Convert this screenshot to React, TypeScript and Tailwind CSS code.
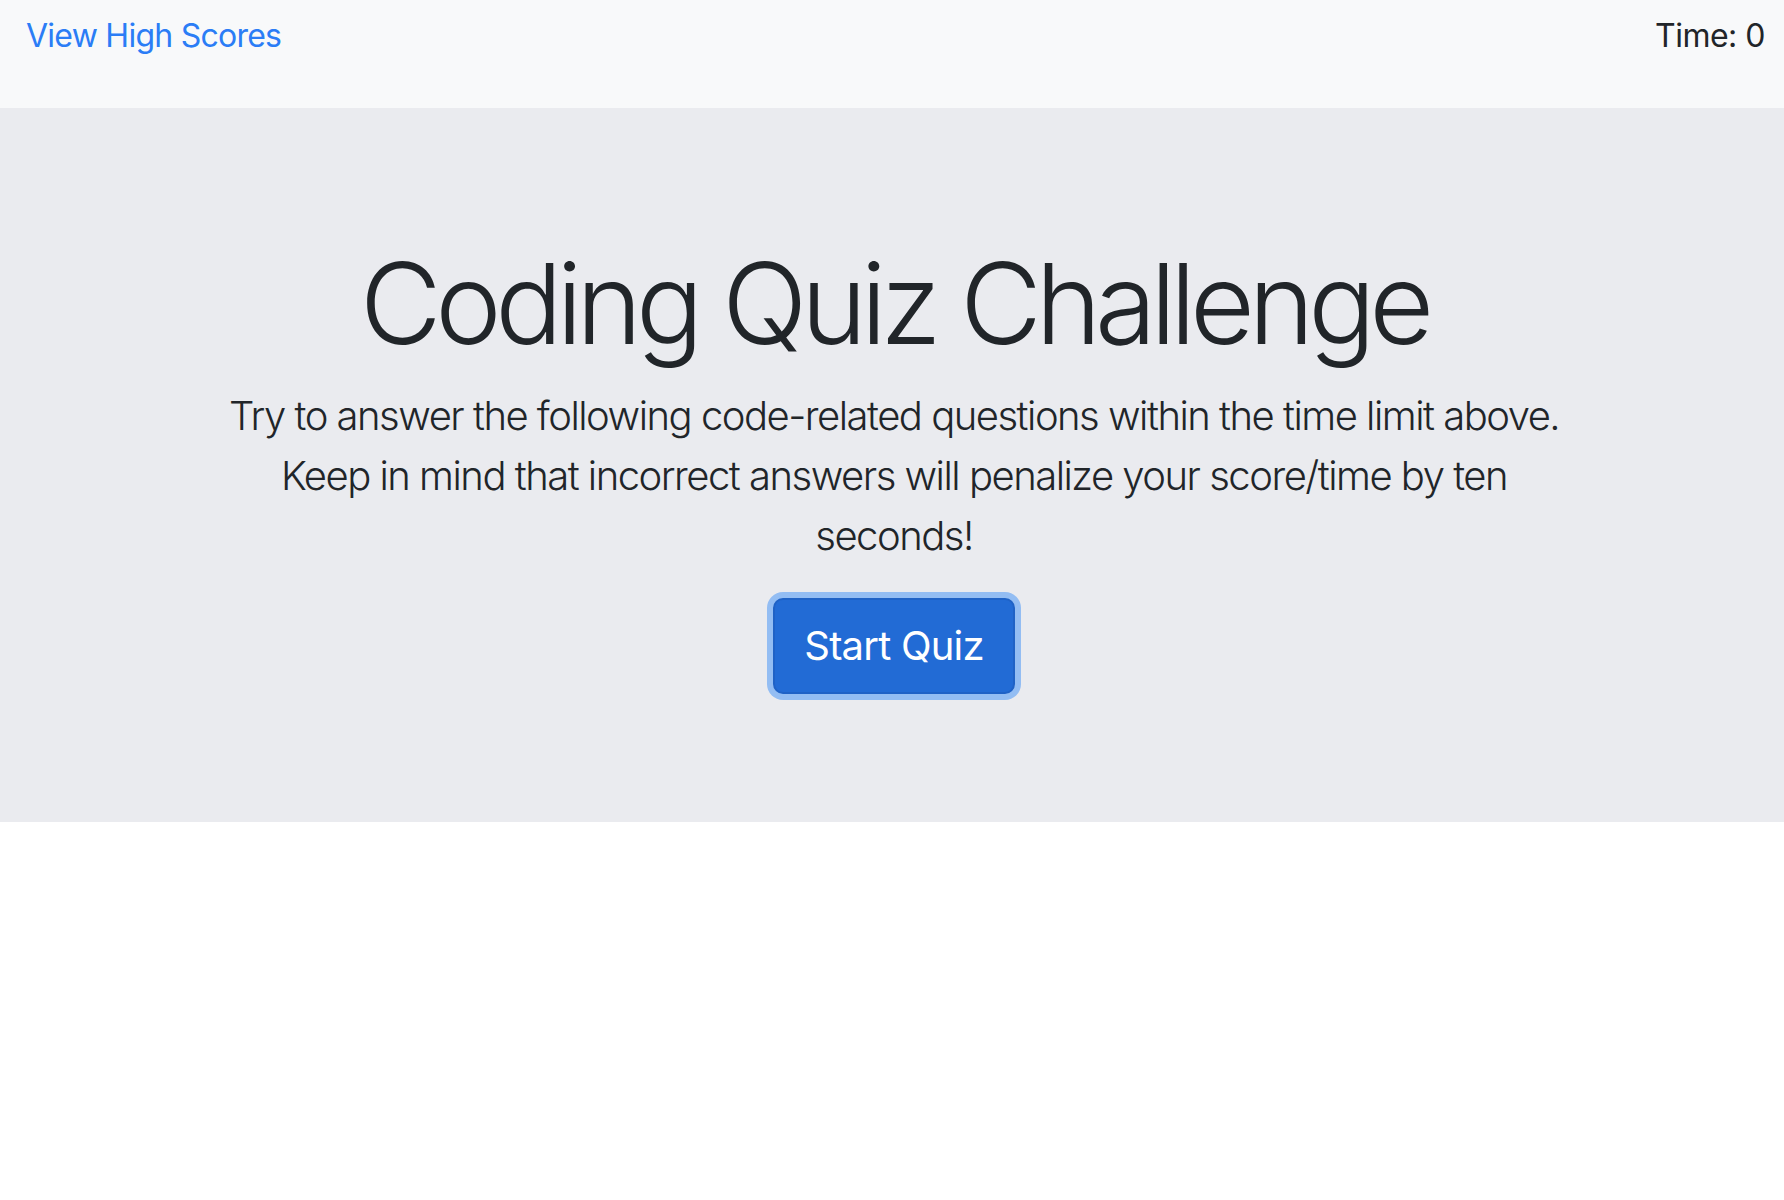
const App = () => {
  return (
    <div className="min-h-screen bg-white font-['Inter','Liberation_Sans',sans-serif] text-[#212529]">

      <nav className="h-[108px] bg-[#f8f9fa] flex justify-between items-start px-[26px] pt-[12px] pr-[19px]">
        <a
          href="#"
          className="text-[32px] leading-[48px] tracking-[-0.75px] text-[#2b7df6]"
        >
          View High Scores
        </a>
        <span className="text-[32px] leading-[48px] tracking-[-0.5px]">
          Time: 0
        </span>
      </nav>

      <section className="bg-[#eaebef] pt-[128px] pb-[128px]">
        <div className="max-w-[1440px] mx-auto pl-[34px] pr-[30px] text-center">

          <h1 className="text-[112px] leading-[134px] font-light tracking-[-6.3px] mb-[16px]">
            Coding Quiz Challenge
          </h1>

          <p className="text-[40px] leading-[60px] font-light tracking-[-1.5px] mb-[32px]">
            Try to answer the following code-related questions within the time limit above. Keep in mind that incorrect answers will penalize your score/time by ten seconds!
          </p>

          <button className="h-[96px] w-[242px] rounded-[10px] bg-[#226bd5] border-2 border-[#1f62c6] text-white text-[40px] leading-[60px] tracking-[-0.8px] shadow-[0_0_0_6px_#93bdf3]">
            Start Quiz
          </button>

        </div>
      </section>

    </div>
  );
};

export default App;
